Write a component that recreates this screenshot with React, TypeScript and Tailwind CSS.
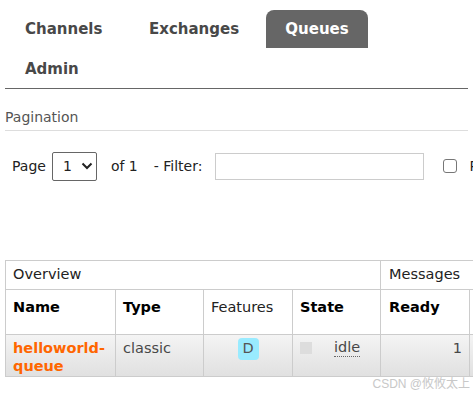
import React from "react";

const tabs = [
  { label: "Channels", w: "w-[117px]", active: false },
  { label: "Exchanges", w: "w-[130px]", active: false },
  { label: "Queues", w: "w-[102px]", active: true },
  { label: "Admin", w: "w-[93px]", active: false },
];

const App: React.FC = () => {
  return (
    <div className="w-[473px] h-[396px] overflow-hidden bg-white text-[#484848] font-['DejaVu_Sans',_Verdana,_sans-serif] relative">
      {/* top navigation */}
      <div className="pt-[10px] mx-[5px] border-b border-[#666]">
        <ul className="flex flex-wrap w-[420px] gap-x-[7px] gap-y-[2px]">
          {tabs.map((t) => (
            <li
              key={t.label}
              className={`${t.w} h-[38px] flex items-center px-[20px] text-[15px] font-bold ${
                t.active ? "bg-[#666] text-white rounded-t-[8px] justify-center" : "text-[#484848]"
              }`}
            >
              {t.label}
            </li>
          ))}
        </ul>
      </div>

      {/* pagination */}
      <div className="mx-[5px] mt-[19px]">
        <h3 className="text-[14px] text-[#555] leading-[18px] pb-[4px] border-b border-[#ddd]">Pagination</h3>
        <div className="flex items-center h-[30px] mt-[20px] pl-[7px] text-[14px] text-[#222] whitespace-nowrap">
          <span className="shrink-0">Page</span>
          <div className="shrink-0 ml-[6px] w-[45px] h-[29px] border border-[#666] rounded-[2px] flex items-center pl-[10px] gap-[9px]">
            <span>1</span>
            <svg width="12" height="8" viewBox="0 0 12 8">
              <path d="M1.5 1.5 L6 6 L10.5 1.5" fill="none" stroke="#222" strokeWidth="2" />
            </svg>
          </div>
          <span className="shrink-0 ml-[14px]">of 1</span>
          <span className="shrink-0 ml-[16px]">- Filter:</span>
          <div className="shrink-0 ml-[13px] w-[209px] h-[27px] border border-[#ccc]" />
          <div className="shrink-0 ml-[19px] w-[14px] h-[14px] border border-[#777] rounded-[3px]" />
          <span className="shrink-0 ml-[12px]">P</span>
        </div>
      </div>

      {/* queues table */}
      <div className="mt-[79px] ml-[5px] w-[468px] overflow-hidden">
        <table className="border-collapse text-[14.5px] w-[560px] table-fixed">
          <colgroup>
            <col className="w-[110px]" />
            <col className="w-[88px]" />
            <col className="w-[89px]" />
            <col className="w-[88px]" />
            <col className="w-[89px]" />
            <col className="w-[96px]" />
          </colgroup>
          <thead>
            <tr className="h-[29px]">
              <th colSpan={4} className="border border-[#ccc] text-left font-normal px-[7px] text-[#222]">Overview</th>
              <th colSpan={2} className="border border-[#ccc] text-left font-normal px-[8px] text-[#222]">Messages</th>
            </tr>
            <tr className="h-[45px]">
              <th className="border border-[#ccc] text-left align-top pt-[7px] px-[7px] text-black">Name</th>
              <th className="border border-[#ccc] text-left align-top pt-[7px] px-[7px] text-black">Type</th>
              <th className="border border-[#ccc] text-left align-top pt-[7px] px-[7px] font-normal text-[#222]">Features</th>
              <th className="border border-[#ccc] text-left align-top pt-[7px] px-[7px] text-black">State</th>
              <th className="border border-[#ccc] text-left align-top pt-[7px] px-[8px] text-black">Ready</th>
              <th className="border border-[#ccc]" />
            </tr>
          </thead>
          <tbody>
            <tr className="h-[42px] bg-gradient-to-b from-[#f4f4f4] to-[#e0e0e0]">
              <td className="border border-[#ccc] align-top pt-[4px] px-[7px] leading-[18px] font-bold text-[#ff6600] break-words">
                helloworld-queue
              </td>
              <td className="border border-[#ccc] align-top pt-[4px] px-[7px] leading-[18px] text-[#484848]">classic</td>
              <td className="border border-[#ccc] align-top pt-[3px] text-center">
                <span className="inline-flex items-center justify-center w-[21px] h-[22px] rounded-[4px] bg-[#99ebff] text-[#555] text-[14.5px]">
                  D
                </span>
              </td>
              <td className="border border-[#ccc] align-top pt-[6px] px-[7px]">
                <div className="flex items-start">
                  <span className="w-[12px] h-[12px] bg-[#ddd] mt-[1px]" />
                  <span className="ml-[22px] -mt-[3px] leading-[18px] text-[#484848] border-b border-dotted border-[#666]">idle</span>
                </div>
              </td>
              <td className="border border-[#ccc] align-top pt-[4px] px-[7px] leading-[18px] text-right text-[#484848]">1</td>
              <td className="border border-[#ccc]" />
            </tr>
          </tbody>
        </table>
      </div>

      <div className="absolute right-[3px] bottom-[3px] text-[12px] text-[#c8c8c8] font-['Liberation_Sans',_'Noto_Sans_CJK_SC',_sans-serif]">
        CSDN @攸攸太上
      </div>
    </div>
  );
};

export default App;
